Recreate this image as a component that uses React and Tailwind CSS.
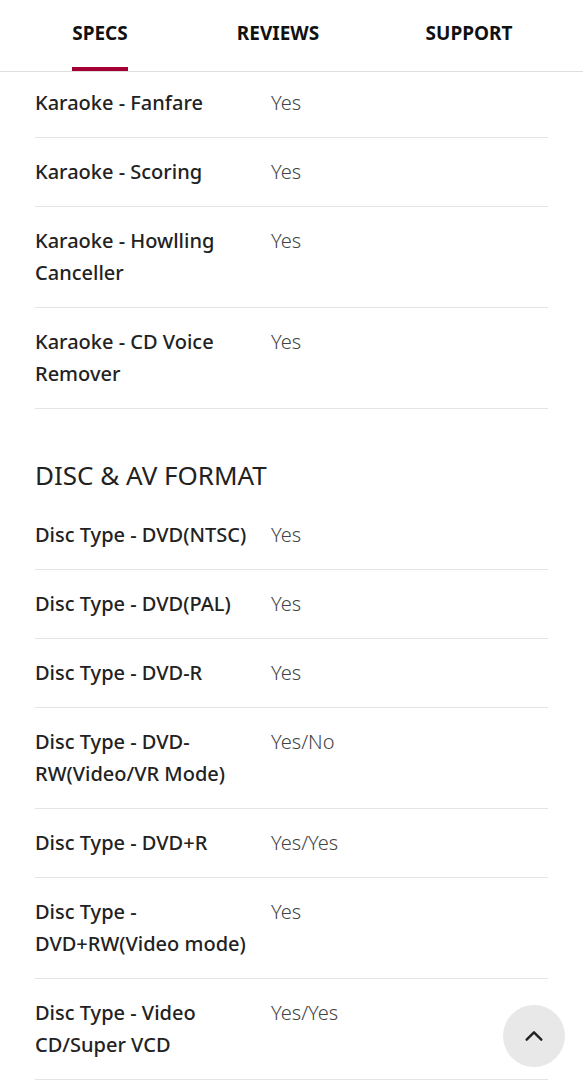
import React from 'react';

const karaoke = [
  ['Karaoke - Fanfare', 'Yes'],
  ['Karaoke - Scoring', 'Yes'],
  ['Karaoke - Howlling Canceller', 'Yes'],
  ['Karaoke - CD Voice Remover', 'Yes'],
];

const disc = [
  ['Disc Type - DVD(NTSC)', 'Yes'],
  ['Disc Type - DVD(PAL)', 'Yes'],
  ['Disc Type - DVD-R', 'Yes'],
  ['Disc Type - DVD-RW(Video/VR Mode)', 'Yes/No'],
  ['Disc Type - DVD+R', 'Yes/Yes'],
  ['Disc Type - DVD+RW(Video mode)', 'Yes'],
  ['Disc Type - Video CD/Super VCD', 'Yes/Yes'],
];

const SpecRow = ({ label, value, first }) => (
  <div className={`flex border-b border-[#e4e4e4] ${first ? 'pt-[15px]' : 'pt-[18px]'} pb-[18px]`}>
    <div className="w-[236px] shrink-0 pr-4 text-[20px] leading-[32px] font-medium text-[#222]">
      {label}
    </div>
    <div className="flex-1 text-[20px] leading-[32px] font-light text-[#444]">{value}</div>
  </div>
);

const App = () => {
  return (
    <div className="relative w-[583px] h-[1080px] overflow-hidden bg-white" style={{ fontFamily: '"Noto Sans", "Open Sans", sans-serif' }}>
      <div className="flex h-[72px] border-b border-[#dedede]">
        <div className="w-[200px] flex justify-center">
          <span className="flex items-center h-full border-b-4 border-[#a50034] text-[19px] font-bold text-[#111]">SPECS</span>
        </div>
        <div className="w-[156px] flex justify-center items-center pb-[4px] text-[19px] font-bold text-[#111]">REVIEWS</div>
        <div className="w-[226px] flex justify-center items-center pb-[4px] text-[19px] font-bold text-[#111]">SUPPORT</div>
      </div>

      <div className="px-[35px]">
        {karaoke.map(([l, v], i) => (
          <SpecRow key={l} label={l} value={v} first={i === 0} />
        ))}

        <h2 className="pt-[48px] pb-[8px] text-[26px] leading-[36px] font-normal text-[#222]">DISC &amp; AV FORMAT</h2>

        {disc.map(([l, v]) => (
          <SpecRow key={l} label={l} value={v} />
        ))}
      </div>

      <button className="absolute left-[503px] top-[1005px] w-[62px] h-[62px] rounded-full bg-[#e8e8e8] flex items-center justify-center">
        <svg width="22" height="22" viewBox="0 0 24 24" fill="none" stroke="#222" strokeWidth="2.6" strokeLinecap="round" strokeLinejoin="round">
          <path d="M4 16l8-8 8 8" />
        </svg>
      </button>
    </div>
  );
};

export default App;
